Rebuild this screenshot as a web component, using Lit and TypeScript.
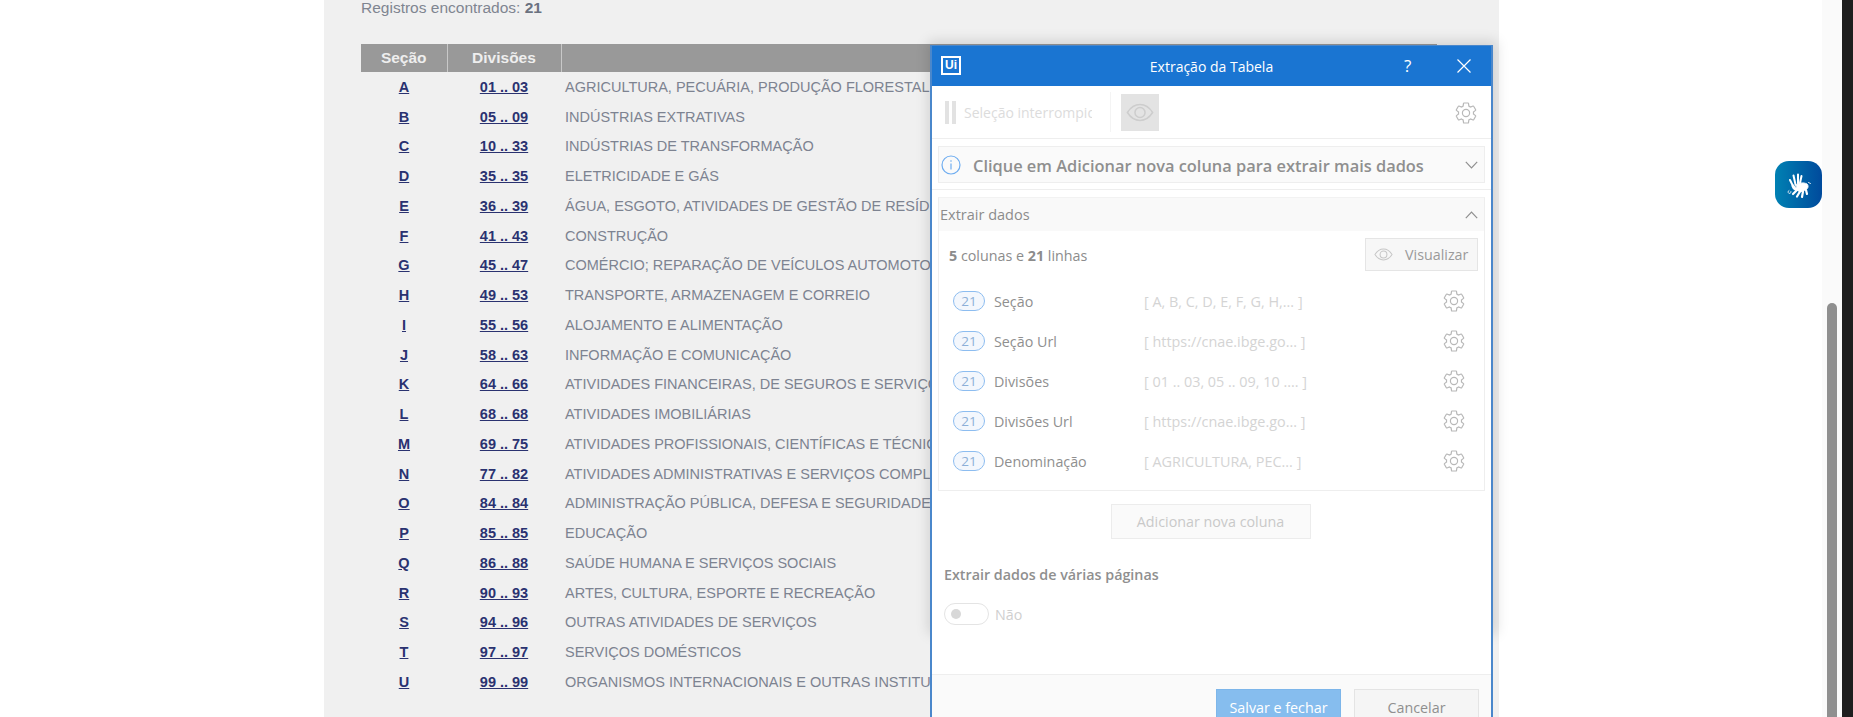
import { LitElement, html, css, svg } from "lit";
import { customElement } from "lit/decorators.js";

const ROWS: [string, string, string][] = [
  ["A", "01 .. 03", "AGRICULTURA, PECUÁRIA, PRODUÇÃO FLORESTAL, PESCA E AQÜICULTURA"],
  ["B", "05 .. 09", "INDÚSTRIAS EXTRATIVAS"],
  ["C", "10 .. 33", "INDÚSTRIAS DE TRANSFORMAÇÃO"],
  ["D", "35 .. 35", "ELETRICIDADE E GÁS"],
  ["E", "36 .. 39", "ÁGUA, ESGOTO, ATIVIDADES DE GESTÃO DE RESÍDUOS E DESCONTAMINAÇÃO"],
  ["F", "41 .. 43", "CONSTRUÇÃO"],
  ["G", "45 .. 47", "COMÉRCIO; REPARAÇÃO DE VEÍCULOS AUTOMOTORES E MOTOCICLETAS"],
  ["H", "49 .. 53", "TRANSPORTE, ARMAZENAGEM E CORREIO"],
  ["I", "55 .. 56", "ALOJAMENTO E ALIMENTAÇÃO"],
  ["J", "58 .. 63", "INFORMAÇÃO E COMUNICAÇÃO"],
  ["K", "64 .. 66", "ATIVIDADES FINANCEIRAS, DE SEGUROS E SERVIÇOS RELACIONADOS"],
  ["L", "68 .. 68", "ATIVIDADES IMOBILIÁRIAS"],
  ["M", "69 .. 75", "ATIVIDADES PROFISSIONAIS, CIENTÍFICAS E TÉCNICAS"],
  ["N", "77 .. 82", "ATIVIDADES ADMINISTRATIVAS E SERVIÇOS COMPLEMENTARES"],
  ["O", "84 .. 84", "ADMINISTRAÇÃO PÚBLICA, DEFESA E SEGURIDADE SOCIAL"],
  ["P", "85 .. 85", "EDUCAÇÃO"],
  ["Q", "86 .. 88", "SAÚDE HUMANA E SERVIÇOS SOCIAIS"],
  ["R", "90 .. 93", "ARTES, CULTURA, ESPORTE E RECREAÇÃO"],
  ["S", "94 .. 96", "OUTRAS ATIVIDADES DE SERVIÇOS"],
  ["T", "97 .. 97", "SERVIÇOS DOMÉSTICOS"],
  ["U", "99 .. 99", "ORGANISMOS INTERNACIONAIS E OUTRAS INSTITUIÇÕES EXTRATERRITORIAIS"],
];

const COLS: [string, string][] = [
  ["Seção", "[ A, B, C, D, E, F, G, H,...  ]"],
  ["Seção Url", "[ https://cnae.ibge.go... ]"],
  ["Divisões", "[ 01 .. 03, 05 .. 09, 10 .... ]"],
  ["Divisões Url", "[ https://cnae.ibge.go... ]"],
  ["Denominação", "[ AGRICULTURA, PEC...  ]"],
];

const gear = (size: number) => html`<svg class="gear" width=${size} height=${size} viewBox="0 0 24 24" fill="none" stroke="#b8b8b8" stroke-width="1.2">
  <path d="M19.43 12.98c.04-.32.07-.64.07-.98s-.03-.66-.07-.98l2.11-1.65c.19-.15.24-.42.12-.64l-2-3.46c-.12-.22-.39-.3-.61-.22l-2.49 1c-.52-.4-1.08-.73-1.69-.98l-.38-2.65C14.46 2.18 14.25 2 14 2h-4c-.25 0-.46.18-.49.42l-.38 2.65c-.61.25-1.17.59-1.69.98l-2.49-1c-.23-.09-.49 0-.61.22l-2 3.46c-.13.22-.07.49.12.64l2.11 1.65c-.04.32-.07.65-.07.98s.03.66.07.98l-2.11 1.65c-.19.15-.24.42-.12.64l2 3.46c.12.22.39.3.61.22l2.49-1c.52.4 1.08.73 1.69.98l.38 2.65c.03.24.24.42.49.42h4c.25 0 .46-.18.49-.42l.38-2.65c.61-.25 1.17-.59 1.69-.98l2.49 1c.23.09.49 0 .61-.22l2-3.46c.12-.22.07-.49-.12-.64l-2.11-1.65z"/>
  <circle cx="12" cy="12" r="3.6"/>
</svg>`;

const eye = (w: number, color: string) => html`<svg width=${w} height=${Math.round((w * 2) / 3)} viewBox="0 0 30 20" fill="none" stroke=${color} stroke-width="1.6">
  <path d="M1.5 10C5 4.5 9.5 1.5 15 1.5S25 4.5 28.5 10C25 15.5 20.5 18.5 15 18.5S5 15.5 1.5 10z"/>
  <circle cx="15" cy="10" r="5.4"/>
</svg>`;

const chevron = (up: boolean) => html`<svg width="13" height="8" viewBox="0 0 13 8" fill="none" stroke="#8f8f8f" stroke-width="1.2">
  ${up ? svg`<path d="M.8 7.2 6.5 1.2l5.7 6"/>` : svg`<path d="M.8.8l5.7 6 5.7-6"/>`}
</svg>`;

@customElement("page-table")
class PageTable extends LitElement {
  static styles = css`
    :host { display: block; font-family: "Liberation Sans", Arial, sans-serif; }
    .found { font-size: 15.5px; line-height: 16px; color: #7f8590; height: 44px; }
    .found b { color: #6b7280; }
    table { border-collapse: collapse; width: 1076px; table-layout: fixed; }
    th { background: #999; color: #eee; font-size: 15.5px; font-weight: bold; height: 28px; padding: 0; border-right: 1px solid #c8c8c8; }
    th:last-child { border-right: 0; }
    td { height: 29.75px; padding: 0; font-size: 14.5px; white-space: nowrap; overflow: hidden; }
    td.c { text-align: center; font-weight: bold; }
    td.c a { color: #2a3270; text-decoration: underline; }
    td.d { padding-left: 4px; color: #7d8391; }
  `;
  render() {
    return html`
      <div class="found">Registros encontrados: <b>21</b></div>
      <table>
        <colgroup><col style="width:86px" /><col style="width:114px" /><col /></colgroup>
        <thead><tr><th>Seção</th><th>Divisões</th><th></th></tr></thead>
        <tbody>
          ${ROWS.map(
            ([a, b, c]) => html`<tr>
              <td class="c"><a>${a}</a></td>
              <td class="c"><a>${b}</a></td>
              <td class="d">${c}</td>
            </tr>`,
          )}
        </tbody>
      </table>
    `;
  }
}

@customElement("extract-dialog")
class ExtractDialog extends LitElement {
  static styles = css`
    :host {
      position: absolute; left: 930px; top: 45px; width: 563px; height: 690px; box-sizing: border-box;
      display: flex; flex-direction: column; background: #fff;
      border: 2px solid #4a87cb; border-top-width: 1px; border-bottom: 0;
      font-family: "Open Sans", "Noto Sans", sans-serif; color: #8c8c8c; font-size: 14.3px;
    }
    .title { height: 40px; flex: none; background: #1a75d2; color: #fff; display: flex; align-items: center; position: relative; justify-content: center; font-size: 14px; padding-top: 1px; box-sizing: border-box; }
    .logo { position: absolute; left: 9px; top: 10px; width: 16px; height: 15px; border: 2px solid #fff; color: #fff; font-size: 12px; font-weight: 700; line-height: 15px; text-align: center; font-family: "Liberation Sans", sans-serif; }
    .q { position: absolute; left: 472px; top: 9px; font-size: 17px; line-height: 22px; }
    .x { position: absolute; left: 525px; top: 13px; }
    .tools { height: 53px; flex: none; display: flex; align-items: center; border-bottom: 1px solid #eee; box-sizing: border-box; }
    .pause { display: flex; gap: 3px; margin-left: 13px; }
    .pause i { display: block; width: 4px; height: 23px; background: #e2e2e2; }
    .seltext { width: 128px; margin-left: 8px; overflow: hidden; white-space: nowrap; color: #dcdcdc; font-size: 14px; }
    .sep { width: 1px; height: 40px; background: #f4f4f4; margin-left: 18px; }
    .eyebtn { width: 38px; height: 37px; background: #e3e3e3; margin-left: 10px; display: flex; align-items: center; justify-content: center; }
    .tools .gear { margin-left: auto; margin-right: 13px; position: relative; top: 1px; }
    .info { margin: 7px 6px 0; height: 37px; flex: none; box-sizing: border-box; background: #fafafa; border: 1px solid #eee; display: flex; align-items: center; }
    .info svg:first-child { margin-left: 2px; }
    .info span { margin-left: 12px; font-size: 16.4px; font-weight: 600; color: #8f8f8f; white-space: nowrap; padding-top: 1px; }
    .info .chev { margin-left: auto; margin-right: 6px; display: flex; }
    .rule { height: 1px; flex: none; background: #eee; margin-top: 6px; }
    .box { margin: 7px 6px 0; flex: none; height: 294px; box-sizing: border-box; border: 1px solid #eee; border-top-color: #f2f2f2; display: flex; flex-direction: column; }
    .box-h { height: 33px; flex: none; background: #f9f9f9; display: flex; align-items: center; padding: 0 6px 0 1px; justify-content: space-between; font-size: 14.5px; font-weight: 500; color: #8c8c8c; }
    .sum { height: 50px; flex: none; display: flex; align-items: center; justify-content: space-between; padding: 0 6px 0 10px; }
    .sum > span { margin-bottom: 2px; }
    .sum b { font-weight: 700; }
    .vis { width: 113px; height: 33px; margin-bottom: 3px; box-sizing: border-box; border: 1px solid #e5e5e5; background: #f7f7f7; display: flex; align-items: center; gap: 12px; padding-left: 8px; color: #9a9a9a; }
    .rows { display: flex; flex-direction: column; }
    .row { height: 40px; display: flex; align-items: center; padding-left: 14px; }
    .badge { width: 32px; height: 20px; box-sizing: border-box; border: 1px solid #8dbdf0; background: #f3f7fd; border-radius: 10px; color: #8db0d8; text-align: center; font-size: 13.5px; line-height: 18px; }
    .name { width: 150px; margin-left: 9px; color: #8f8f8f; white-space: nowrap; }
    .val { width: 170px; color: #d4d4d4; white-space: nowrap; overflow: hidden; font-size: 14.4px; }
    .row .gear { margin-left: auto; margin-right: 18px; }
    .add-wrap { display: flex; justify-content: center; margin-top: 13px; padding-right: 2px; flex: none; }
    .add { width: 200px; height: 35px; box-sizing: border-box; border: 1px solid #ececec; background: #fafafa; color: #c9c9c9; display: flex; align-items: center; justify-content: center; }
    .multi { margin: 26px 0 0 12px; font-weight: 600; color: #8f8f8f; line-height: 20px; flex: none; }
    .tog-row { margin: 18px 0 0 12px; display: flex; align-items: center; gap: 6px; color: #cfcfcf; flex: none; }
    .tog { width: 45px; height: 22px; box-sizing: border-box; border: 1px solid #e4e4e4; border-radius: 11px; display: flex; align-items: center; padding-left: 6px; }
    .tog i { width: 10px; height: 10px; border-radius: 50%; background: #d8d8d8; display: block; }
    .foot { margin-top: 49px; flex: 1; background: #fafafa; border-top: 1px solid #eee; display: flex; justify-content: flex-end; gap: 13px; padding: 14px 12px 0 0; }
    .foot div { width: 125px; height: 36px; box-sizing: border-box; display: flex; align-items: center; justify-content: center; }
    .save { background: #86bdee; border: 1px solid #7db6ea; color: #fff; }
    .cancel { background: #f5f5f5; border: 1px solid #e4e4e4; color: #8f8f8f; }
  `;
  render() {
    return html`
      <div class="title">
        <span class="logo">Ui</span>
        Extração da Tabela
        <span class="q">?</span>
        <svg class="x" width="14" height="14" viewBox="0 0 14 14" stroke="#fff" stroke-width="1.2"><path d="M.5.5l13 13M13.5.5l-13 13" /></svg>
      </div>
      <div class="tools">
        <div class="pause"><i></i><i></i></div>
        <div class="seltext">Seleção interrompida</div>
        <div class="sep"></div>
        <div class="eyebtn">${eye(28, "#cdcdcd")}</div>
        ${gear(24)}
      </div>
      <div class="info">
        <svg width="20" height="20" viewBox="0 0 20 20" fill="none" stroke="#6fadf0" stroke-width="1.2"><circle cx="10" cy="10" r="9" /><path d="M10 8.5v6M10 5.2v1.6" /></svg>
        <span>Clique em Adicionar nova coluna para extrair mais dados</span>
        <div class="chev">${chevron(false)}</div>
      </div>
      <div class="rule"></div>
      <div class="box">
        <div class="box-h"><span>Extrair dados</span>${chevron(true)}</div>
        <div class="sum">
          <span><b>5</b> colunas e <b>21</b> linhas</span>
          <div class="vis">${eye(19, "#c6c6c6")}<span>Visualizar</span></div>
        </div>
        <div class="rows">
          ${COLS.map(
            ([n, v]) => html`<div class="row">
              <span class="badge">21</span>
              <span class="name">${n}</span>
              <span class="val">${v}</span>
              ${gear(24)}
            </div>`,
          )}
        </div>
      </div>
      <div class="add-wrap"><div class="add">Adicionar nova coluna</div></div>
      <div class="multi">Extrair dados de várias páginas</div>
      <div class="tog-row"><div class="tog"><i></i></div><span>Não</span></div>
      <div class="foot"><div class="save">Salvar e fechar</div><div class="cancel">Cancelar</div></div>
    `;
  }
}

@customElement("app-root")
class AppRoot extends LitElement {
  static styles = css`
    :host { display: flex; position: relative; height: 717px; overflow: hidden; background: #fff; }
    .gutter { width: 324px; flex: none; }
    .panel { width: 1175px; flex: none; background: #f0f0f0; box-sizing: border-box; padding: 0 0 0 37px; overflow: hidden; }
    .mid { flex: 1; }
    .track { width: 20px; flex: none; background: #fafafa; padding: 303px 5px 0 5px; box-sizing: border-box; }
    .thumb { height: 500px; border-radius: 6px 6px 0 0; background: #8f8f8f; }
    .edge { width: 11px; flex: none; background: #1e1e1e; }
    .shadow { position: absolute; left: 932px; top: 45px; width: 561px; height: 585px; box-shadow: 0 0 12px 4px rgba(0, 0, 0, 0.13); }
    .vlibras { position: absolute; left: 1775px; top: 161px; width: 47px; height: 47px; border-radius: 14px; background: linear-gradient(90deg, #0081b3, #004a9c); display: flex; align-items: center; justify-content: center; }
  `;
  render() {
    return html`
      <div class="gutter"></div>
      <div class="panel"><page-table></page-table></div>
      <div class="mid"></div>
      <div class="track"><div class="thumb"></div></div>
      <div class="edge"></div>
      <div class="shadow"></div>
      <extract-dialog></extract-dialog>
      <div class="vlibras">
        <svg width="30" height="30" viewBox="0 0 30 30" fill="none" stroke="#fff" stroke-linecap="round">
          <g stroke-width="2">
            <path d="M6 10l3 6M9.5 5.5l2 9M14 4.5v9M17.5 6l-1.5 7" />
            <path d="M9 16c1 3 3 4 6 3" stroke-width="3" />
          </g>
          <g stroke-width="2.2">
            <path d="M12 15c3-2 7-3 11-1 2 2 1 5-2 6l-5 2-3-2z" fill="#fff" stroke-width="1" />
            <path d="M13 20l-4 4M16 21.5l-3 5M19 21.5l-1 5.5M22 20l1 4" />
          </g>
          <path d="M24.5 12.5l2 1M5 20.5a1.5 1.5 0 1 0 2 1" stroke-width=".8" />
        </svg>
      </div>
    `;
  }
}
